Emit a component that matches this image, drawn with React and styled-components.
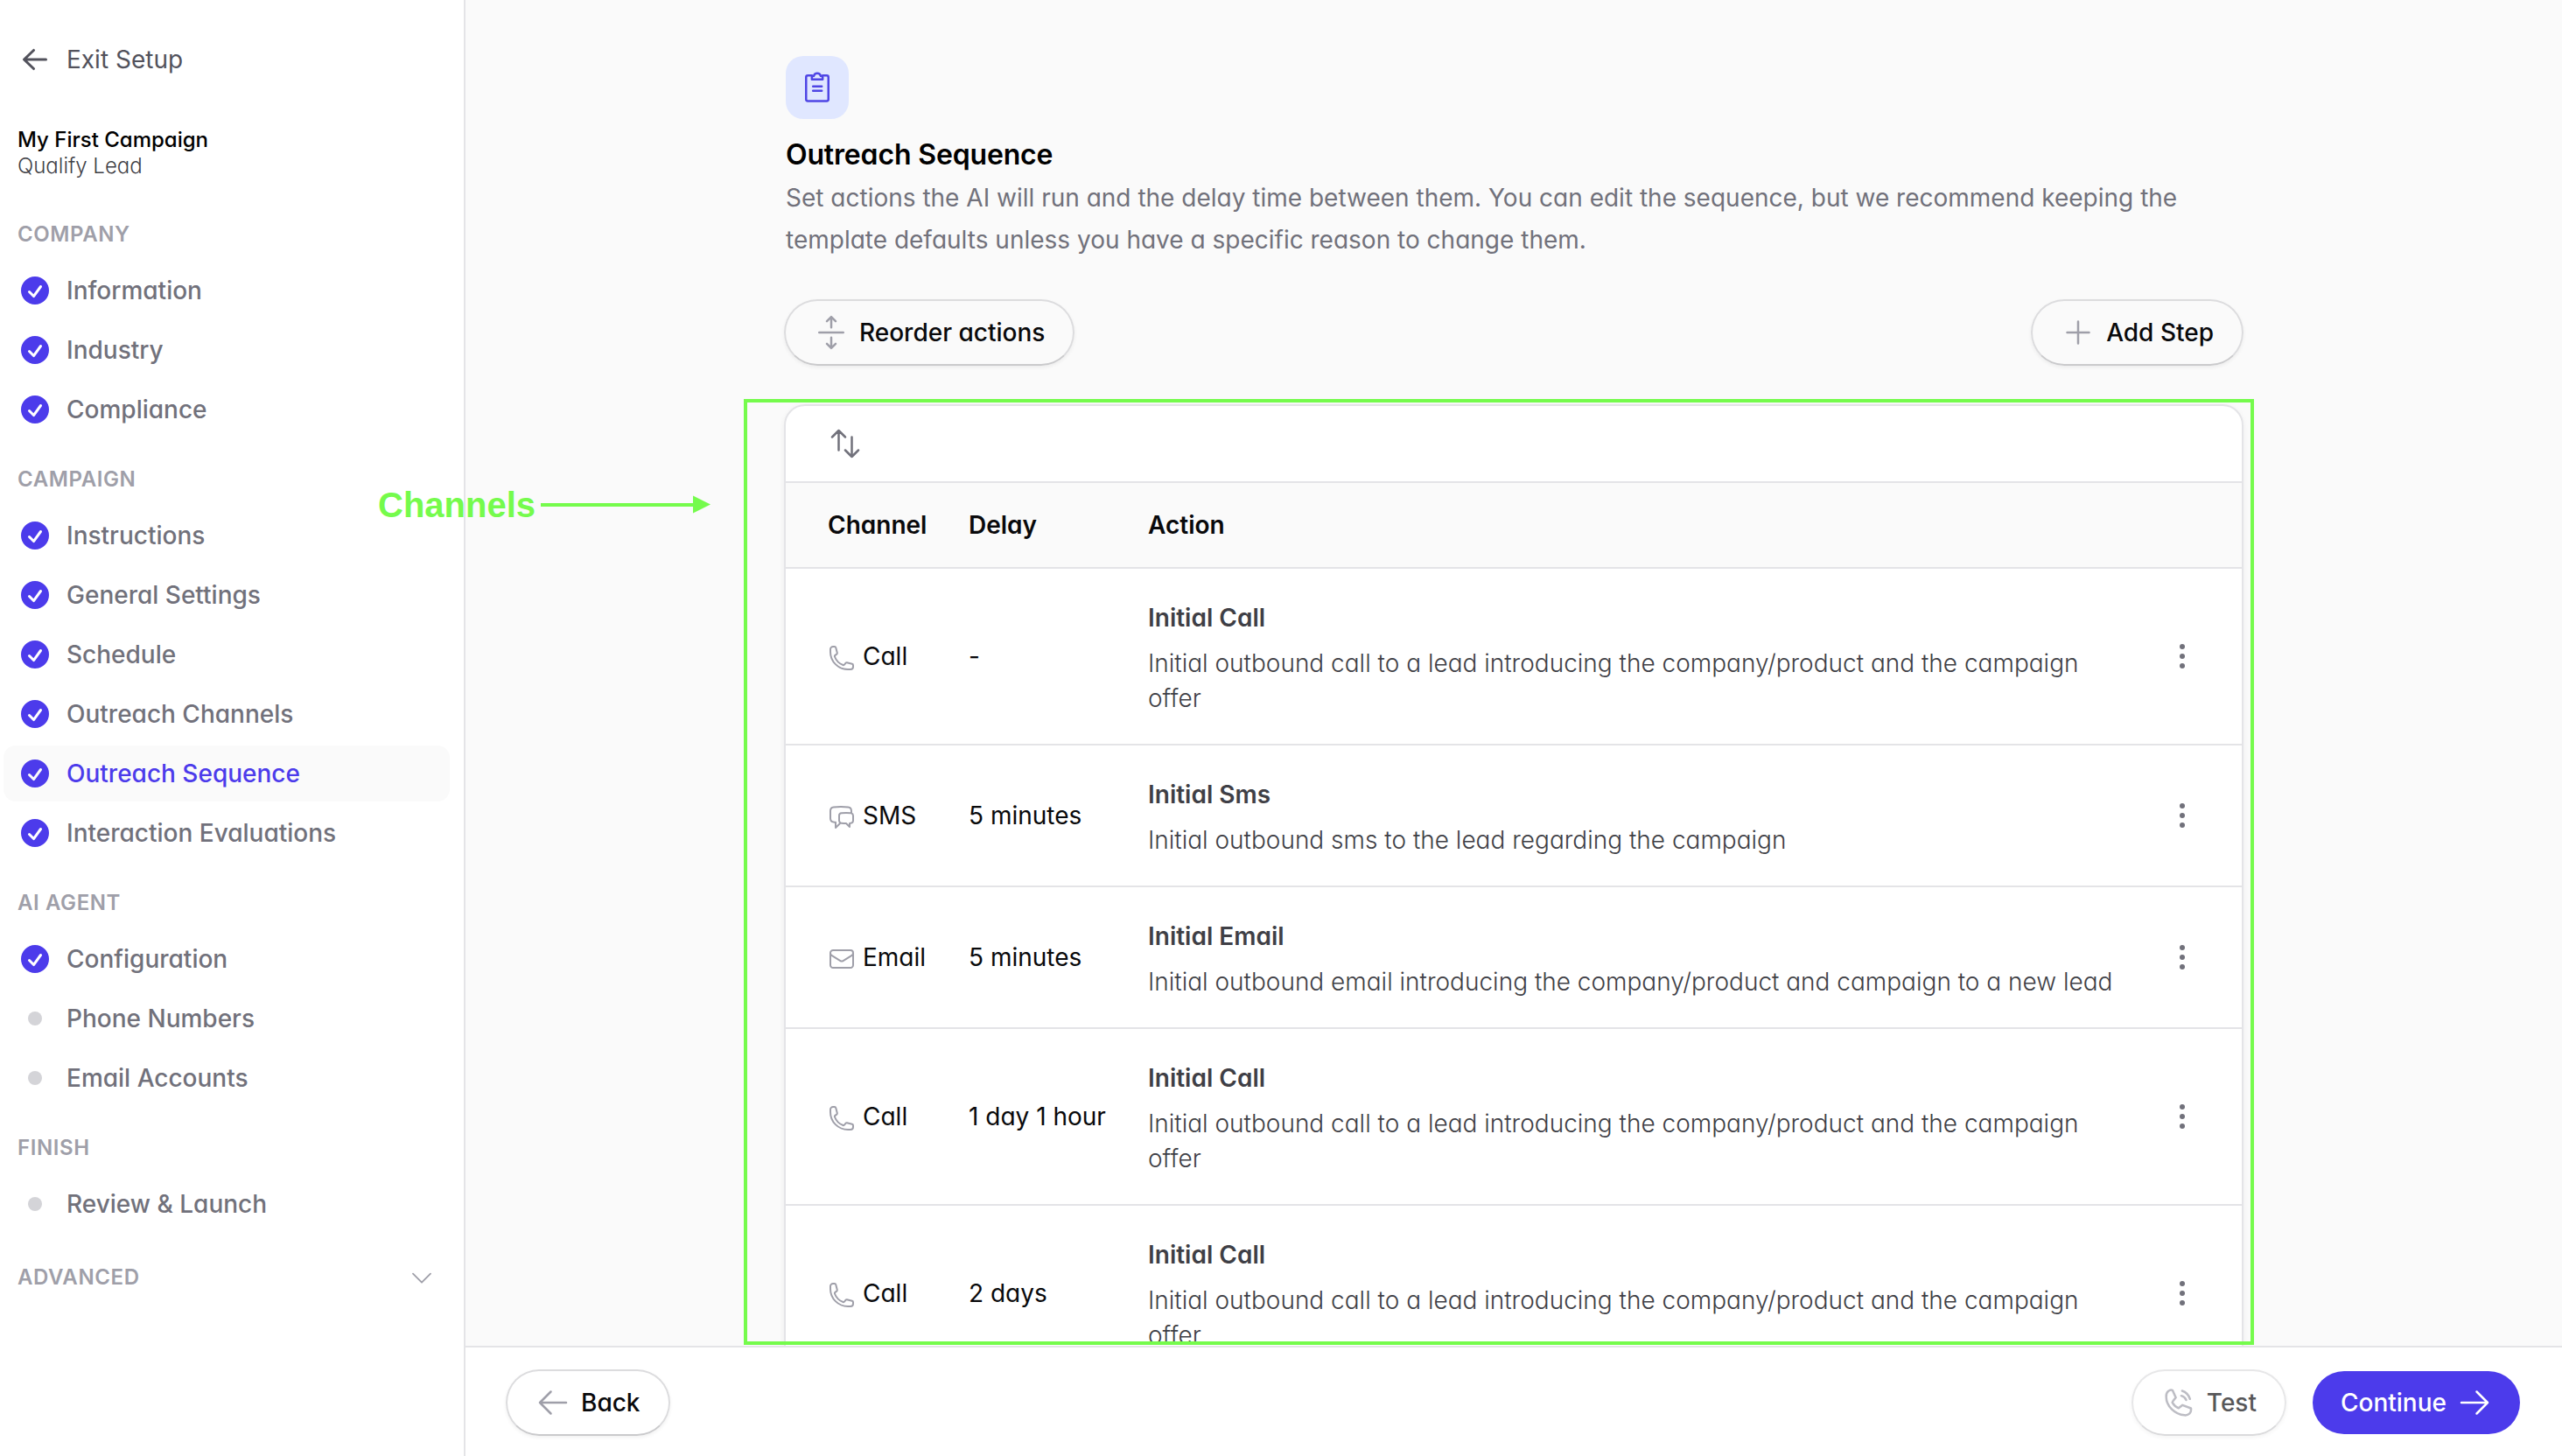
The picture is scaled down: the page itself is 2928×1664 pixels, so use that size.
import React from 'react';
import styled, { createGlobalStyle, css } from 'styled-components';

const Global = createGlobalStyle`
  *, *::before, *::after { box-sizing: border-box; }
  body {
    margin: 0;
    overflow: hidden;
    background: #fafafa;
    font-family: Inter, "Liberation Sans", sans-serif;
    font-feature-settings: "cv11";
    -webkit-font-smoothing: antialiased;
  }
  button { font: inherit; font-feature-settings: inherit; border: 0; background: none; padding: 0; color: inherit; }
  h1, h2, p { margin: 0; }
  svg { flex: none; }
`;

const Page = styled.div`
  position: relative;
  display: flex;
  width: 2928px;
  height: 1664px;
  overflow: hidden;
`;

const Sidebar = styled.aside`
  flex: none;
  width: 532px;
  padding: 36px 16px 0 4px;
  background: #fff;
  border-right: 2px solid #e4e4e7;
`;

const NavItem = styled.div`
  display: flex;
  align-items: center;
  gap: 16px;
  height: 64px;
  padding-left: 16px;
  border-radius: 14px;
  font-size: 28px;
  font-weight: ${(p) => (p.$dark ? 400 : 500)};
  color: ${(p) => (p.$active ? '#4c3beb' : p.$dark ? '#52525c' : '#71717b')};
  background: ${(p) => (p.$active ? '#fafafa' : 'transparent')};
`;

const Marker = styled.span`
  flex: none;
  display: flex;
  align-items: center;
  justify-content: center;
  width: 40px;
  height: 40px;
`;

const Dot = styled.span`
  width: 16px;
  height: 16px;
  border-radius: 50%;
  background: #d4d4d8;
`;

const Campaign = styled.div`
  padding: 45px 16px 0;
  font-size: 24px;
  line-height: 30px;
`;
const CampaignName = styled.div`
  font-weight: 500;
  color: #000;
`;
const CampaignGoal = styled.div`
  font-weight: 300;
  color: #3f3f46;
`;

const NavGroup = styled.section`
  display: flex;
  flex-direction: column;
  gap: 4px;
  margin-top: ${(p) => p.$top}px;
`;
const GroupTitle = styled.h2`
  display: flex;
  justify-content: space-between;
  align-items: center;
  height: 49px;
  padding: 0 16px;
  margin-bottom: 4px;
  font-size: 24px;
  font-weight: 600;
  letter-spacing: 0.6px;
  color: #9f9fa9;
`;

const Main = styled.main`
  flex: 1;
  display: flex;
  flex-direction: column;
  min-width: 0;
  background: #fafafa;
`;
const Scroll = styled.div`
  flex: 1;
  min-height: 0;
  overflow: hidden;
  padding: 64px 0 0 366px;
`;
const Column = styled.div`
  width: 1664px;
`;
const IconTile = styled.div`
  display: flex;
  align-items: center;
  justify-content: center;
  width: 72px;
  height: 72px;
  border-radius: 20px;
  background: #e0e7ff;
`;
const Title = styled.h1`
  margin-top: 17px;
  font-size: 32px;
  line-height: 48px;
  font-weight: 600;
  letter-spacing: -0.16px;
  color: #000;
`;
const Lead = styled.p`
  margin-top: 1px;
  font-size: 28px;
  line-height: 48px;
  color: #71717b;
`;
const Actions = styled.div`
  display: flex;
  justify-content: space-between;
  margin: 44px -2px 0;
`;

const Button = styled.button`
  display: flex;
  align-items: center;
  gap: 12px;
  height: ${(p) => (p.$primary ? 72 : 76)}px;
  padding: 0 32px;
  border-radius: 38px;
  font-size: 28px;
  font-weight: 500;
  white-space: nowrap;
  color: #09090b;
  ${(p) =>
    p.$primary
      ? css`
          color: #fff;
          background: #4c3beb;
        `
      : css`
          border: 2px solid #dcdcde;
          border-bottom-color: #cacacc;
          box-shadow: 0 2px 4px rgba(0, 0, 0, 0.06);
        `}
  ${(p) => p.$faded && css`opacity: 0.68;`}
`;

const Card = styled.div`
  margin: 44px -2px 0;
  border: 2px solid #e4e4e7;
  border-radius: 24px 24px 0 0;
  background: #fff;
  box-shadow: 0 2px 6px rgba(0, 0, 0, 0.06);
  overflow: hidden;
`;
const SortBar = styled.div`
  display: flex;
  align-items: center;
  height: 88px;
  padding-left: 48px;
  border-bottom: 2px solid #e4e4e7;
`;
const Row = styled.div`
  display: grid;
  grid-template-columns: 161px 205px 1fr 136px;
  align-items: center;
  height: ${(p) => p.$height}px;
  padding-left: 48px;
  border-bottom: 2px solid #e4e4e7;
  font-size: 28px;
  color: #09090b;
  ${(p) =>
    p.$head &&
    css`
      font-weight: 600;
      background: #fafafa;
    `}
`;
const Channel = styled.div`
  display: flex;
  align-items: center;
  gap: 8px;
  svg { margin-top: 4px; }
`;
const ActionCell = styled.div`
  padding-top: 4px;
  line-height: 40px;
  color: #3f3f46;
`;
const ActionName = styled.div`
  font-weight: 600;
`;
const ActionText = styled.div`
  margin-top: 12px;
  font-weight: 300;
`;
const Menu = styled.div`
  display: flex;
  flex-direction: column;
  align-items: center;
  gap: 5px;
  span { width: 6px; height: 6px; border-radius: 50%; background: #71717b; }
`;

const Footer = styled.footer`
  flex: none;
  display: flex;
  align-items: center;
  height: 126px;
  padding: 2px 48px 0 46px;
  border-top: 2px solid #e4e4e7;
  background: #fff;
`;
const Push = styled.div`
  display: flex;
  align-items: center;
  gap: 30px;
  margin-left: auto;
`;

const Highlight = styled.div`
  position: absolute;
  left: 850px;
  top: 456px;
  width: 1726px;
  height: 1081px;
  border: 4px solid #75fb4c;
`;
const Callout = styled.div`
  position: absolute;
  left: 432px;
  top: 553px;
  display: flex;
  align-items: center;
  gap: 6px;
  font-family: "Liberation Sans", Arial, sans-serif;
  font-size: 40px;
  line-height: 48px;
  font-weight: 700;
  color: #75fb4c;
`;

const Svg = ({ s, sw = 1.5, color = 'currentColor', children }) => (
  <svg width={s} height={s} viewBox="0 0 24 24" fill="none" stroke={color} strokeWidth={sw} strokeLinecap="round" strokeLinejoin="round">
    {children}
  </svg>
);
const ExitArrow = () => (
  <svg width="40" height="40" viewBox="0 0 20 20" fill="currentColor">
    <path fillRule="evenodd" d="M17 10a.75.75 0 0 1-.75.75H5.612l4.158 3.96a.75.75 0 1 1-1.04 1.08l-5.5-5.25a.75.75 0 0 1 0-1.08l5.5-5.25a.75.75 0 1 1 1.04 1.08L5.612 9.25H16.25A.75.75 0 0 1 17 10Z" />
  </svg>
);
const Check = () => (
  <svg width="40" height="40" viewBox="0 0 20 20" fill="#4c3beb">
    <path fillRule="evenodd" d="M10 18a8 8 0 1 0 0-16 8 8 0 0 0 0 16Zm3.857-9.809a.75.75 0 0 0-1.214-.882l-3.483 4.79-1.88-1.88a.75.75 0 1 0-1.06 1.061l2.5 2.5a.75.75 0 0 0 1.137-.089l4-5.5Z" />
  </svg>
);
const channelIcons = {
  Call: (
    <path d="M2.25 6.75c0 8.284 6.716 15 15 15h2.25a2.25 2.25 0 0 0 2.25-2.25v-1.372c0-.516-.351-.966-.852-1.091l-4.423-1.106c-.44-.11-.902.055-1.173.417l-.97 1.293c-.282.376-.769.542-1.21.38a12.035 12.035 0 0 1-7.143-7.143c-.162-.441.004-.928.38-1.21l1.293-.97c.363-.271.527-.734.417-1.173L6.963 3.102a1.125 1.125 0 0 0-1.091-.852H4.5A2.25 2.25 0 0 0 2.25 4.5v2.25Z" />
  ),
  SMS: (
    <path d="M20.25 8.511c.884.284 1.5 1.128 1.5 2.097v4.286c0 1.136-.847 2.1-1.98 2.193-.34.027-.68.052-1.02.072v3.091l-3-3c-1.354 0-2.694-.055-4.02-.163a2.115 2.115 0 0 1-.825-.242m9.345-8.334a2.126 2.126 0 0 0-.476-.095 48.64 48.64 0 0 0-8.048 0c-1.131.094-1.976 1.057-1.976 2.192v4.286c0 .837.46 1.58 1.155 1.951m9.345-8.334V6.637c0-1.621-1.152-3.026-2.76-3.235A48.455 48.455 0 0 0 11.25 3c-2.115 0-4.198.137-6.24.402-1.608.209-2.76 1.614-2.76 3.235v6.226c0 1.621 1.152 3.026 2.76 3.235.577.075 1.157.14 1.74.194V21l4.155-4.155" />
  ),
  Email: (
    <path d="M21.75 6.75v10.5a2.25 2.25 0 0 1-2.25 2.25h-15a2.25 2.25 0 0 1-2.25-2.25V6.75m19.5 0A2.25 2.25 0 0 0 19.5 4.5h-15a2.25 2.25 0 0 0-2.25 2.25m19.5 0v.243a2.25 2.25 0 0 1-1.07 1.916l-7.5 4.615a2.25 2.25 0 0 1-2.36 0L3.32 8.91a2.25 2.25 0 0 1-1.07-1.916V6.75" />
  ),
};

const groups = [
  { title: 'COMPANY', top: 38, items: [['Information', 1], ['Industry', 1], ['Compliance', 1]] },
  { title: 'CAMPAIGN', top: 23, items: [['Instructions', 1], ['General Settings', 1], ['Schedule', 1], ['Outreach Channels', 1], ['Outreach Sequence', 1], ['Interaction Evaluations', 1]] },
  { title: 'AI AGENT', top: 23, items: [['Configuration', 1], ['Phone Numbers', 0], ['Email Accounts', 0]] },
  { title: 'FINISH', top: 23, items: [['Review & Launch', 0]] },
];

const callText = 'Initial outbound call to a lead introducing the company/product and the campaign offer';
const steps = [
  { channel: 'Call', delay: '-', name: 'Initial Call', text: callText, height: 202 },
  { channel: 'SMS', delay: '5 minutes', name: 'Initial Sms', text: 'Initial outbound sms to the lead regarding the campaign', height: 162 },
  { channel: 'Email', delay: '5 minutes', name: 'Initial Email', text: 'Initial outbound email introducing the company/product and campaign to a new lead', height: 162 },
  { channel: 'Call', delay: '1 day 1 hour', name: 'Initial Call', text: callText, height: 202 },
  { channel: 'Call', delay: '2 days', name: 'Initial Call', text: callText, height: 202 },
];

export default function App() {
  return (
    <Page>
      <Global />
      <Sidebar>
        <NavItem $dark>
          <Marker><ExitArrow /></Marker>
          Exit Setup
        </NavItem>
        <Campaign>
          <CampaignName>My First Campaign</CampaignName>
          <CampaignGoal>Qualify Lead</CampaignGoal>
        </Campaign>
        {groups.map((g) => (
          <NavGroup key={g.title} $top={g.top}>
            <GroupTitle>{g.title}</GroupTitle>
            {g.items.map(([label, done]) => (
              <NavItem key={label} $active={label === 'Outreach Sequence'}>
                <Marker>{done ? <Check /> : <Dot />}</Marker>
                {label}
              </NavItem>
            ))}
          </NavGroup>
        ))}
        <NavGroup $top={27}>
          <GroupTitle>
            ADVANCED
            <Svg s={32} sw={1.4}><path d="m19.5 8.75-7.5 7.5-7.5-7.5" /></Svg>
          </GroupTitle>
        </NavGroup>
      </Sidebar>
      <Main>
        <Scroll>
          <Column>
            <IconTile>
              <Svg s={40} color="#4f46e5">
                <path d="M8.3 3.75H5.5a1.15 1.15 0 0 0-1.15 1.15v15.2a1.15 1.15 0 0 0 1.15 1.15h13a1.15 1.15 0 0 0 1.15-1.15V4.9a1.15 1.15 0 0 0-1.15-1.15h-2.8" />
                <path d="M8.3 6.45V5.1a1 1 0 0 1 1-1h.3a2.5 2.5 0 0 1 4.8 0h.3a1 1 0 0 1 1 1v1.35zM9.100 11.200h6M9.100 14.200h6" />
              </Svg>
            </IconTile>
            <Title>Outreach Sequence</Title>
            <Lead>
              Set actions the AI will run and the delay time between them. You can edit the sequence, but we recommend keeping the template defaults unless you have a specific reason to change them.
            </Lead>
            <Actions>
              <Button>
                <Svg s={40} color="#9f9fa9"><path d="M3.75 12h16.500M12 8.600V1.300M9 4.300l3-3 3 3M12 15.400v7.300M9 19.700l3 3 3-3" /></Svg>
                Reorder actions
              </Button>
              <Button>
                <Svg s={40} color="#9f9fa9"><path d="M12 4.500v15m7.500-7.500h-15" /></Svg>
                Add Step
              </Button>
            </Actions>
            <Card>
              <SortBar>
                <Svg s={40} color="#71717b"><path d="M3 7.500 7.500 3m0 0L12 7.500M7.500 3v13.500m13.500 0L16.500 21m0 0L12 16.500m4.500 4.500V7.500" /></Svg>
              </SortBar>
              <Row $head $height={98}>
                <div>Channel</div>
                <div>Delay</div>
                <div>Action</div>
              </Row>
              {steps.map((s, i) => (
                <Row key={i} $height={s.height}>
                  <Channel>
                    <Svg s={32} color="#9f9fa9">{channelIcons[s.channel]}</Svg>
                    {s.channel}
                  </Channel>
                  <div>{s.delay}</div>
                  <ActionCell>
                    <ActionName>{s.name}</ActionName>
                    <ActionText>{s.text}</ActionText>
                  </ActionCell>
                  <Menu><span /><span /><span /></Menu>
                </Row>
              ))}
            </Card>
          </Column>
        </Scroll>
        <Footer>
          <Button>
            <Svg s={40} color="#9f9fa9"><path d="M10.5 19.5 3 12m0 0 7.5-7.5M3 12h18" /></Svg>
            Back
          </Button>
          <Push>
            <Button $faded>
              <Svg s={40} color="#9f9fa9">
                <path d="M4.900 4.100C5.700 3.400 6.900 3.200 7.700 3.500L10 8.600C9.200 9.600 8 10.600 7.600 11.900C8.500 13.500 10 15 11.900 15.800L14.600 13.700L20.400 15.900C20.600 17.300 20.200 18.700 19.300 19.600C18.300 20.500 17 20.700 15.900 20.600C9.500 20.200 3.400 14.500 3.400 8.100C3.300 6.400 3.700 5 4.900 4.100z" />
                <path d="M14.300 3.900c2.600.900 4.600 3 5.400 5.600M13.700 7.300c1.500.400 2.800 1.500 3.400 2.900" />
              </Svg>
              Test
            </Button>
            <Button $primary>
              Continue
              <Svg s={40}><path d="M13.5 4.5 21 12m0 0-7.5 7.5M21 12H3" /></Svg>
            </Button>
          </Push>
        </Footer>
      </Main>
      <Highlight />
      <Callout>
        Channels
        <svg width="196" height="24" viewBox="0 0 196 24">
          <path d="M0 12h178" stroke="#75fb4c" strokeWidth="4" />
          <path d="M174 1.500v20l20-10z" fill="#75fb4c" />
        </svg>
      </Callout>
    </Page>
  );
}
